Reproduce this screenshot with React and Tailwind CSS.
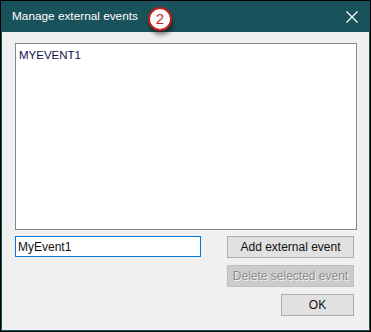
import React from 'react';

function Btn({ children, className = '', disabled }) {
  return (
    <div
      className={
        'flex items-center justify-center h-[22px] border text-[12px] ' +
        (disabled
          ? 'bg-[#cccccc] border-[#bfbfbf] text-[#8d8d8d] [text-shadow:1px_1px_0_#f4f4f4] '
          : 'bg-[#e1e1e1] border-[#adadad] text-[#111] ') +
        className
      }
    >
      {children}
    </div>
  );
}

export default function App() {
  return (
    <div className="w-[371px] h-[332px] border border-black bg-[#1a525c] p-px" style={{ fontFamily: '"Liberation Sans", Arial, sans-serif' }}>
      <div className="flex flex-col h-full">
        {/* title bar */}
        <div className="relative h-[30px] flex items-center pl-[10px] text-white">
          <span className="text-[11.8px]">Manage external events</span>
          <div className="absolute left-[146px] top-[5px] w-[24px] h-[24px] rounded-full bg-white border-2 border-[#c81d1d] flex items-center justify-center text-[#c81d1d] text-[15px] shadow-[1px_4px_4px_rgba(0,0,0,0.45)]">
            2
          </div>
          <svg className="absolute right-[11px] top-[9px]" width="12" height="12" viewBox="0 0 12 12">
            <path d="M0.5 0.5 L11.5 11.5 M11.5 0.5 L0.5 11.5" stroke="white" strokeWidth="1.2" />
          </svg>
        </div>
        {/* content */}
        <div className="flex-1 bg-[#f0f0f0] pl-[13px] pr-[13px] pt-[11px]">
          <div className="w-[342px] h-[187px] bg-white border border-[#828790] px-[3px] py-[3px] text-[11.5px] text-[#10104a]">
            MYEVENT1
          </div>
          <div className="flex justify-between mt-[6px] pr-[2px]">
            <div className="w-[186px] h-[21px] bg-white border border-[#0078d7] flex items-center px-[2px] text-[12px] text-[#111]">
              MyEvent1
            </div>
            <Btn className="w-[127px]">Add external event</Btn>
          </div>
          <div className="flex justify-end mt-[7px] pr-[2px]">
            <Btn className="w-[127px]" disabled>Delete selected event</Btn>
          </div>
          <div className="flex justify-end mt-[7px] pr-[2px]">
            <Btn className="w-[73px]">OK</Btn>
          </div>
        </div>
      </div>
    </div>
  );
}
